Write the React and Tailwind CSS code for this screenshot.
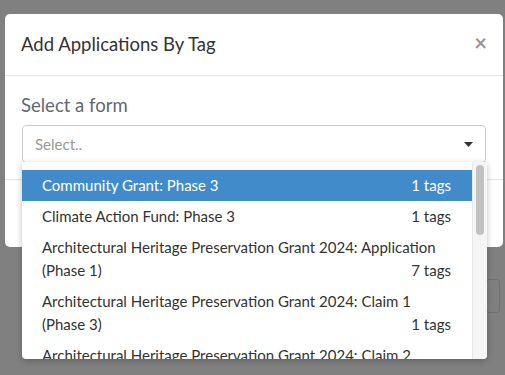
import React from 'react';

const options = [
  { label: 'Community Grant: Phase 3', tags: 1 },
  { label: 'Climate Action Fund: Phase 3', tags: 1 },
  { label: 'Architectural Heritage Preservation Grant 2024: Application (Phase 1)', tags: 7 },
  { label: 'Architectural Heritage Preservation Grant 2024: Claim 1 (Phase 3)', tags: 1 },
  { label: 'Architectural Heritage Preservation Grant 2024: Claim 2 (Phase 3)', tags: 1 },
];

function Option({ option, active }) {
  return (
    <div
      className={
        active
          ? 'grid grid-cols-1 py-1 pl-5 pr-[21px] bg-[#428bca] text-white'
          : 'grid grid-cols-1 py-1 pl-5 pr-[21px] text-[#333]'
      }
    >
      <span className="col-start-1 row-start-1 pr-1">{option.label}</span>
      <span className="col-start-1 row-start-1 self-end justify-self-end whitespace-nowrap">
        {option.tags} tags
      </span>
    </div>
  );
}

export default function App() {
  return (
    <div
      className="w-[505px] h-[375px] overflow-hidden bg-[#808080] pt-[14px] px-[5px]"
      style={{ fontFamily: 'Lato, "Noto Sans", sans-serif' }}
    >
      {/* modal */}
      <div className="relative w-[498px] bg-white rounded-[5px]">
        <div className="flex items-center justify-between h-[62px] pl-4 pr-4 border-b border-[#e5e5e5]">
          <h4 className="text-[18.5px] text-[#333]">Add Applications By Tag</h4>
          <button className="text-[22px] font-bold leading-none text-[#999] -mt-1">×</button>
        </div>
        <div className="px-4 pt-[17px] pb-4">
          <label className="block text-[18.5px] text-[#5f6872] leading-[24px]">Select a form</label>
          <div className="relative mt-[8px] mx-px">
            <div className="flex items-center justify-between h-[38px] border border-[#ccc] rounded-[4px] pl-3 pr-3">
              <span className="text-[15px] text-[#999]">Select..</span>
              <svg width="9" height="5" viewBox="0 0 9 5">
                <path d="M0 0 L9 0 L4.5 5 Z" fill="#333" />
              </svg>
            </div>
            {/* dropdown menu */}
            <div className="absolute left-0 top-[37px] w-[465px] h-[197px] bg-white rounded-b-[4px] shadow-[0_2px_6px_rgba(0,0,0,0.25)] flex overflow-hidden z-10">
              <div className="flex-1 pt-2 text-[15px] leading-[23px]">
                {options.map((o, i) => (
                  <Option key={i} option={o} active={i === 0} />
                ))}
              </div>
              <div className="w-[15px] bg-[#f5f5f5] border-l border-[#e8e8e8] pt-[3px] px-[3px]">
                <div className="h-[70px] bg-[#c1c1c1] rounded-full"></div>
              </div>
            </div>
          </div>
        </div>
        <div className="h-[68px] border-t border-[#e5e5e5]"></div>
      </div>
      {/* faint page content behind the backdrop */}
      <div className="flex justify-end gap-1 mt-[32px] pr-0">
        <div className="w-[14px] h-[34px] border border-[#707070] rounded-[3px]"></div>
      </div>
    </div>
  );
}
